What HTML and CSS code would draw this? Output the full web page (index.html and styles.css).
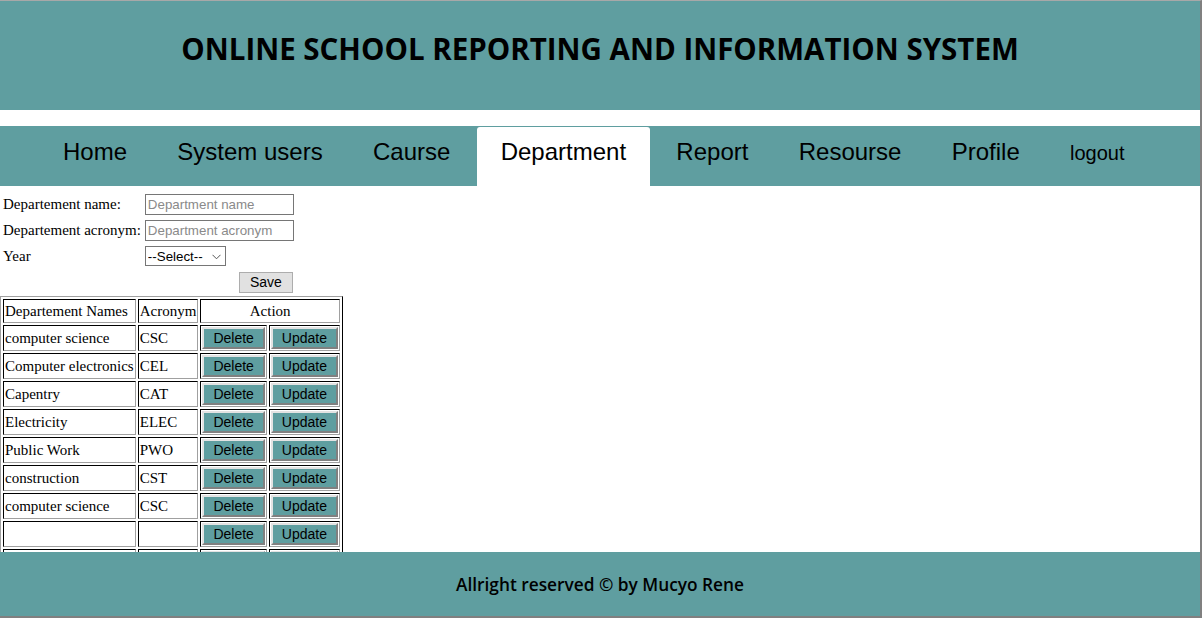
FILE: index.html
```html
<!DOCTYPE html>
<html lang="en">
<head>
<meta charset="utf-8">
<title>Online School Reporting and Information System</title>
<link rel="stylesheet" href="styles.css">
</head>
<body>
<header class="site-header">
  <h1 class="site-title">ONLINE SCHOOL REPORTING AND INFORMATION SYSTEM</h1>
</header>
<nav class="main-nav">
  <ul class="nav-list">
    <li class="nav-item">Home</li>
    <li class="nav-item">System users</li>
    <li class="nav-item">Caurse</li>
    <li class="nav-item active">Department</li>
    <li class="nav-item">Report</li>
    <li class="nav-item">Resourse</li>
    <li class="nav-item">Profile</li>
    <li class="nav-item small">logout</li>
  </ul>
</nav>
<main class="content">
  <form class="dept-form">
    <table class="form-table">
      <tr><td class="label">Departement name:</td><td><input class="text-input" type="text" placeholder="Department name"></td></tr>
      <tr><td class="label">Departement acronym:</td><td><input class="text-input" type="text" placeholder="Department acronym"></td></tr>
      <tr><td class="label">Year</td><td><span class="select-wrap"><select class="year-select"><option>--Select--</option><option>2019</option><option>2020</option></select><svg class="chev" width="9" height="6" viewBox="0 0 9 6"><path d="M0.5 0.8 L4.5 4.8 L8.5 0.8" fill="none" stroke="#555" stroke-width="1"/></svg></span></td></tr>
      <tr><td></td><td class="save-cell"><button type="button" class="save-btn">Save</button></td></tr>
    </table>
  </form>
  <table class="data-table">
    <tr><td>Departement Names</td><td>Acronym</td><td colspan="2" class="center">Action</td></tr>
    <tr><td>computer science</td><td>CSC</td><td><button class="act-btn">Delete</button></td><td><button class="act-btn">Update</button></td></tr>
    <tr><td>Computer electronics</td><td>CEL</td><td><button class="act-btn">Delete</button></td><td><button class="act-btn">Update</button></td></tr>
    <tr><td>Capentry</td><td>CAT</td><td><button class="act-btn">Delete</button></td><td><button class="act-btn">Update</button></td></tr>
    <tr><td>Electricity</td><td>ELEC</td><td><button class="act-btn">Delete</button></td><td><button class="act-btn">Update</button></td></tr>
    <tr><td>Public Work</td><td>PWO</td><td><button class="act-btn">Delete</button></td><td><button class="act-btn">Update</button></td></tr>
    <tr><td>construction</td><td>CST</td><td><button class="act-btn">Delete</button></td><td><button class="act-btn">Update</button></td></tr>
    <tr><td>computer science</td><td>CSC</td><td><button class="act-btn">Delete</button></td><td><button class="act-btn">Update</button></td></tr>
    <tr><td></td><td></td><td><button class="act-btn">Delete</button></td><td><button class="act-btn">Update</button></td></tr>
    <tr><td></td><td></td><td><button class="act-btn">Delete</button></td><td><button class="act-btn">Update</button></td></tr>
    <tr><td></td><td></td><td><button class="act-btn">Delete</button></td><td><button class="act-btn">Update</button></td></tr>
  </table>
</main>
<footer class="site-footer">Allright reserved &copy; by Mucyo Rene</footer>
<div class="window-frame"></div>
</body>
</html>
```
FILE: styles.css
```css
html, body {
  margin: 0;
  padding: 0;
}
body {
  padding-top: 1px;
  background: #fff;
  font-family: "Liberation Serif", "Times New Roman", serif;
  font-size: 15px;
  color: #000;
  padding-bottom: 80px;
}
.site-header {
  background: #5f9ea0;
  height: 109px;
  box-sizing: border-box;
  padding-top: 29px;
  margin-right: 2px;
}
.site-title {
  margin: 0;
  text-align: center;
  font-family: "Open Sans", sans-serif;
  font-weight: 700;
  font-size: 29.5px;
  line-height: 38px;
  color: #000;
}
.main-nav {
  margin-top: 16px;
  background: #5f9ea0;
  height: 60px;
  box-sizing: border-box;
  padding-top: 1px;
}
.nav-list {
  list-style: none;
  margin: 0;
  padding: 0 0 0 39px;
  display: flex;
  gap: 2.3px;
  height: 59px;
}
.nav-item {
  font-family: "Liberation Sans", Arial, sans-serif;
  font-size: 24px;
  padding: 11px 24px 0;
  box-sizing: border-box;
  height: 59px;
}
.nav-item.active {
  background: #fff;
  border-radius: 3px 3px 0 0;
}
.nav-item.small {
  font-size: 20px;
  padding-top: 15px;
}
.content {
  padding-top: 4px;
}
.dept-form {
  margin: 0;
}
.form-table {
  border-collapse: separate;
  border-spacing: 2px;
}
.form-table td {
  padding: 1px;
  height: 22px;
}
.label {
  font-size: 15px;
}
.text-input {
  width: 149px;
  height: 21px;
  box-sizing: border-box;
  border: 1px solid #767676;
  padding: 1px 2px;
  font-family: "Liberation Sans", Arial, sans-serif;
  font-size: 13.33px;
  margin: 0;
}
.text-input::placeholder {
  color: #8a8a8a;
}
.select-wrap {
  display: inline-block;
  position: relative;
}
.year-select {
  appearance: none;
  -webkit-appearance: none;
  width: 81px;
  height: 20px;
  box-sizing: border-box;
  border: 1px solid #767676;
  border-radius: 0;
  background: #fff;
  padding: 0 0 0 2px;
  font-family: "Liberation Sans", Arial, sans-serif;
  font-size: 13.33px;
  color: #000;
  margin: 0;
}
.chev {
  position: absolute;
  right: 5px;
  top: 8px;
  pointer-events: none;
}
.save-cell {
  text-align: right;
}
.save-btn {
  font-family: "Liberation Sans", Arial, sans-serif;
  font-size: 14px;
  background: #e1e1e1;
  border: 1px solid #adadad;
  border-radius: 0;
  width: 54px;
  height: 21px;
  padding: 0;
  margin: 0 1px 0 0;
  color: #000;
}
.data-table {
  margin-left: 0;
  border-collapse: separate;
  border-spacing: 2px;
  border-style: solid;
  border-width: 1px;
  border-color: #a0a0a0 #000 #000 #a0a0a0;
}
.data-table td {
  border-style: solid;
  border-width: 1px;
  border-color: #000 #a0a0a0 #a0a0a0 #000;
  padding: 1px;
  font-size: 15px;
  height: 20px;
}
.data-table .center {
  text-align: center;
}
.act-btn {
  font-family: "Liberation Sans", Arial, sans-serif;
  font-size: 14px;
  background: #5f9ea0;
  color: #000;
  border-style: solid;
  border-width: 2px;
  border-color: #e3e3e3 #808080 #808080 #e3e3e3;
  padding: 1px 9px;
  margin: 0;
  width: 100%;
  height: 22px;
}
.site-footer {
  position: fixed;
  left: 0;
  right: 2px;
  bottom: 2px;
  height: 64px;
  background: #5f9ea0;
  box-sizing: border-box;
  padding-top: 21px;
  text-align: center;
  font-family: "Open Sans", sans-serif;
  font-weight: 600;
  font-size: 17.3px;
  line-height: 24px;
  color: #000;
}
.window-frame {
  position: fixed;
  inset: 0;
  pointer-events: none;
  border-top: 1px solid #a8a8a8;
  border-right: 2px solid #808080;
  border-bottom: 2px solid #808080;
}
```
